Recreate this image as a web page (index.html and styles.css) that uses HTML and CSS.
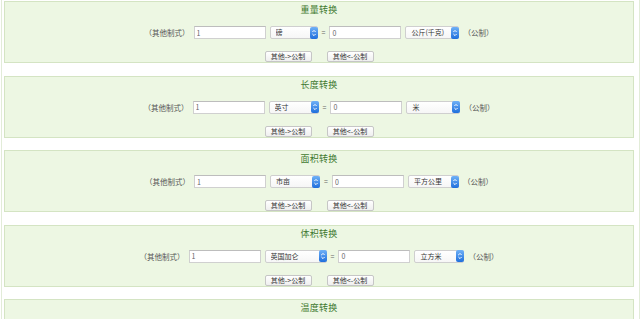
FILE: index.html
```html
<!DOCTYPE html>
<html lang="zh-CN">
<head>
<meta charset="utf-8">
<title>单位换算</title>
<link rel="stylesheet" href="styles.css">
</head>
<body>
<div class="page">

  <section class="conv">
    <h2 class="conv-title">重量转换</h2>
    <div class="conv-row">
      <span class="lbl">（其他制式）</span>
      <input class="num" type="text" value="1">
      <div class="sel sel-48"><select><option>磅</option></select><svg class="arrow" viewBox="0 0 8 12"><defs><linearGradient id="g1" x1="0" y1="0" x2="0" y2="1"><stop offset="0" stop-color="#6fb1f7"/><stop offset="1" stop-color="#1f6fdc"/></linearGradient></defs><rect width="8" height="12" rx="2" fill="url(#g1)"/><path d="M2.4 5L4 3.4L5.6 5M2.4 7L4 8.6L5.6 7" fill="none" stroke="#fff" stroke-width="1"/></svg></div>
      <span class="eq">=</span>
      <input class="num" type="text" value="0">
      <div class="sel sel-54"><select><option>公斤(千克)</option></select><svg class="arrow" viewBox="0 0 8 12"><rect width="8" height="12" rx="2" fill="url(#g1)"/><path d="M2.4 5L4 3.4L5.6 5M2.4 7L4 8.6L5.6 7" fill="none" stroke="#fff" stroke-width="1"/></svg></div>
      <span class="lbl">（公制）</span>
    </div>
    <div class="conv-btns"><button class="btn">其他-&gt;公制</button><button class="btn">其他&lt;-公制</button></div>
  </section>
  <div class="spacer"></div>

  <section class="conv">
    <h2 class="conv-title">长度转换</h2>
    <div class="conv-row">
      <span class="lbl">（其他制式）</span>
      <input class="num" type="text" value="1">
      <div class="sel sel-50"><select><option>英寸</option></select><svg class="arrow" viewBox="0 0 8 12"><rect width="8" height="12" rx="2" fill="url(#g1)"/><path d="M2.4 5L4 3.4L5.6 5M2.4 7L4 8.6L5.6 7" fill="none" stroke="#fff" stroke-width="1"/></svg></div>
      <span class="eq">=</span>
      <input class="num" type="text" value="0">
      <div class="sel sel-54"><select><option>米</option></select><svg class="arrow" viewBox="0 0 8 12"><rect width="8" height="12" rx="2" fill="url(#g1)"/><path d="M2.4 5L4 3.4L5.6 5M2.4 7L4 8.6L5.6 7" fill="none" stroke="#fff" stroke-width="1"/></svg></div>
      <span class="lbl">（公制）</span>
    </div>
    <div class="conv-btns"><button class="btn">其他-&gt;公制</button><button class="btn">其他&lt;-公制</button></div>
  </section>
  <div class="spacer"></div>

  <section class="conv">
    <h2 class="conv-title">面积转换</h2>
    <div class="conv-row">
      <span class="lbl">（其他制式）</span>
      <input class="num" type="text" value="1">
      <div class="sel sel-50"><select><option>市亩</option></select><svg class="arrow" viewBox="0 0 8 12"><rect width="8" height="12" rx="2" fill="url(#g1)"/><path d="M2.4 5L4 3.4L5.6 5M2.4 7L4 8.6L5.6 7" fill="none" stroke="#fff" stroke-width="1"/></svg></div>
      <span class="eq">=</span>
      <input class="num" type="text" value="0">
      <div class="sel sel-51"><select><option>平方公里</option></select><svg class="arrow" viewBox="0 0 8 12"><rect width="8" height="12" rx="2" fill="url(#g1)"/><path d="M2.4 5L4 3.4L5.6 5M2.4 7L4 8.6L5.6 7" fill="none" stroke="#fff" stroke-width="1"/></svg></div>
      <span class="lbl">（公制）</span>
    </div>
    <div class="conv-btns"><button class="btn">其他-&gt;公制</button><button class="btn">其他&lt;-公制</button></div>
  </section>
  <div class="spacer"></div>

  <section class="conv">
    <h2 class="conv-title">体积转换</h2>
    <div class="conv-row">
      <span class="lbl">（其他制式）</span>
      <input class="num" type="text" value="1">
      <div class="sel sel-62"><select><option>英国加仑</option></select><svg class="arrow" viewBox="0 0 8 12"><rect width="8" height="12" rx="2" fill="url(#g1)"/><path d="M2.4 5L4 3.4L5.6 5M2.4 7L4 8.6L5.6 7" fill="none" stroke="#fff" stroke-width="1"/></svg></div>
      <span class="eq">=</span>
      <input class="num" type="text" value="0">
      <div class="sel sel-50"><select><option>立方米</option></select><svg class="arrow" viewBox="0 0 8 12"><rect width="8" height="12" rx="2" fill="url(#g1)"/><path d="M2.4 5L4 3.4L5.6 5M2.4 7L4 8.6L5.6 7" fill="none" stroke="#fff" stroke-width="1"/></svg></div>
      <span class="lbl">（公制）</span>
    </div>
    <div class="conv-btns"><button class="btn">其他-&gt;公制</button><button class="btn">其他&lt;-公制</button></div>
  </section>
  <div class="spacer"></div>

  <section class="conv">
    <h2 class="conv-title">温度转换</h2>
  </section>

</div>
</body>
</html>
```

FILE: styles.css
```css
html, body {
  margin: 0;
  padding: 0;
  background: #ffffff;
}

body {
  font-family: "Noto Sans CJK SC", "Noto Sans", sans-serif;
  color: #555;
  height: 319px;
  overflow: hidden;
}

.page {
  box-sizing: border-box;
  margin: 0 0 0 1px;
  padding: 1px 5px 0 2px;
  border-left: 1px solid #e2ecd8;
  border-right: 1px solid #e2ecd8;
  height: 319px;
  overflow: hidden;
}

.conv {
  box-sizing: border-box;
  height: 62px;
  background: #edf7e3;
  border: 1px solid #d4e4c3;
  display: flex;
  flex-direction: column;
  align-items: center;
}

.conv-title {
  margin: 0;
  height: 16px;
  line-height: 16px;
  font-size: 9px;
  font-weight: normal;
  color: #3f7a30;
  letter-spacing: 0.3px;
}

.conv-row {
  margin-top: 8px;
  height: 13px;
  display: flex;
  align-items: center;
  gap: 4px;
}

.lbl {
  font-size: 7.5px;
  line-height: 13px;
  color: #555;
}

.eq {
  font-size: 7px;
  line-height: 13px;
  color: #666;
}

.num {
  box-sizing: border-box;
  width: 72px;
  height: 13px;
  margin: 0;
  padding: 0 2px;
  border: 1px solid #d0d0d0;
  border-top-color: #bdbdbd;
  background: #fff;
  font-family: inherit;
  font-size: 7px;
  color: #666;
  outline: none;
}

.sel {
  box-sizing: border-box;
  height: 13px;
  display: flex;
  align-items: center;
  background: linear-gradient(#ffffff, #f6f6f6);
  border: 1px solid #cfcfcf;
  border-radius: 2px;
}

.sel select {
  appearance: none;
  -webkit-appearance: none;
  flex: 1;
  min-width: 0;
  height: 11px;
  margin: 0;
  padding: 0 0 0 5px;
  border: none;
  background: transparent;
  font-family: inherit;
  font-size: 7px;
  line-height: 11px;
  color: #333;
  outline: none;
}

.arrow {
  width: 8px;
  height: 12px;
  flex: none;
  margin-right: -1px;
}

.sel-48 { width: 48px; }
.sel-50 { width: 50px; }
.sel-51 { width: 51px; }
.sel-54 { width: 54px; }
.sel-62 { width: 62px; }

.conv-btns {
  margin-top: 12px;
  display: flex;
  gap: 15px;
}

.btn {
  box-sizing: border-box;
  width: 47px;
  height: 11px;
  margin: 0;
  padding: 0;
  border: 1px solid #c6c6c6;
  border-radius: 2px;
  background: linear-gradient(#ffffff, #efefef);
  font-family: inherit;
  font-size: 7px;
  line-height: 9px;
  color: #333;
}

.spacer {
  height: 12.5px;
  background: #ffffff;
}
```
